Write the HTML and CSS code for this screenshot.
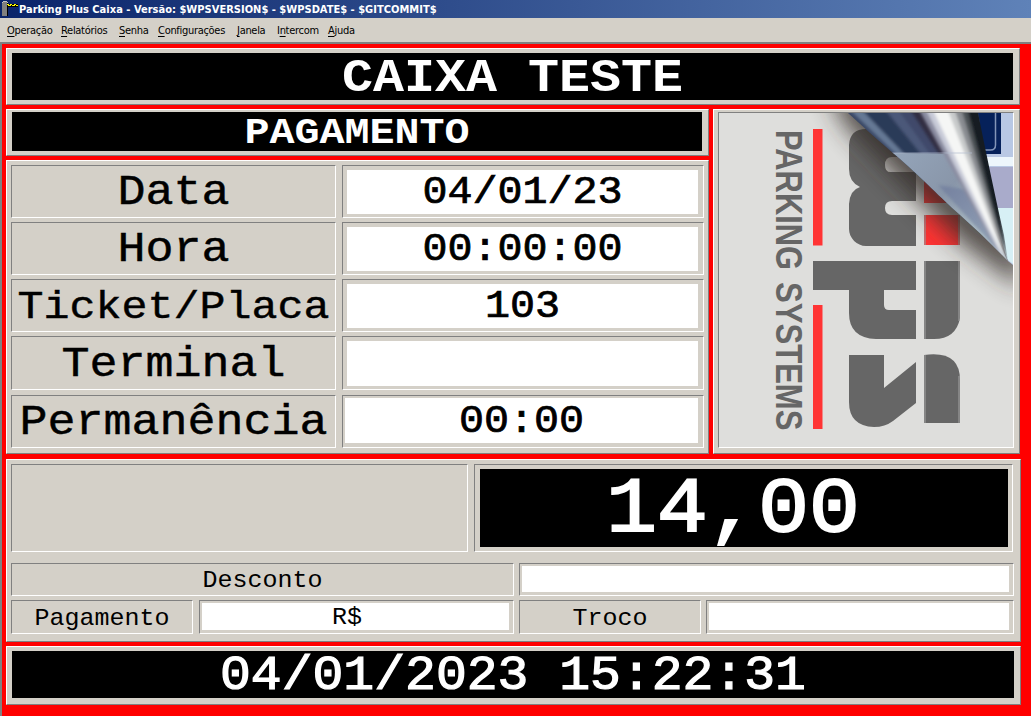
FILE: index.html
```html
<!DOCTYPE html>
<html lang="pt-BR">
<head>
<meta charset="utf-8">
<title>Parking Plus Caixa</title>
<link rel="stylesheet" href="styles.css">
</head>
<body>
<div class="window">
  <header class="titlebar">
    <svg class="app-icon" width="18" height="18" viewBox="0 0 18 18" shape-rendering="crispEdges">
      <path d="M3 2h4v1h1v13H2V3h1z" fill="#808080"/>
      <path d="M3 1h4v1H3zM2 2h1v1H2zM7 2h1v1H7z" fill="#c0c0c0"/>
      <path d="M7 3h1v13H7z" fill="#000"/>
      <path d="M7 4h11v3H7z" fill="#000"/>
      <path d="M7 4h2v1H7zM10 4h2v1h-2zM14 4h2v1h-2zM8 5h3v1H8zM12 5h3v1h-3zM16 5h2v1h-2z" fill="#ff0"/>
    </svg>
    <span class="title">Parking Plus Caixa - Versão: $WPSVERSION$ - $WPSDATE$ - $GITCOMMIT$</span>
  </header>
  <nav class="menubar">
    <span class="menu m-op"><u>O</u>peração</span>
    <span class="menu m-rel"><u>R</u>elatórios</span>
    <span class="menu m-sen"><u>S</u>enha</span>
    <span class="menu m-conf"><u>C</u>onfigurações</span>
    <span class="menu m-jan"><u>J</u>anela</span>
    <span class="menu m-int">I<u>n</u>tercom</span>
    <span class="menu m-aj"><u>A</u>juda</span>
  </nav>
  <main class="board">
    <section class="panel top"><div class="screen caixa"><span>CAIXA TESTE</span></div></section>
    <div class="middle">
      <div class="left">
        <section class="panel mode"><div class="screen pagamento"><span>PAGAMENTO</span></div></section>
        <section class="panel fields">
          <div class="sunken label"><span>Data</span></div>
          <div class="sunken field"><div class="value"><span>04/01/23</span></div></div>
          <div class="sunken label"><span>Hora</span></div>
          <div class="sunken field"><div class="value"><span>00:00:00</span></div></div>
          <div class="sunken label tight"><span>Ticket/Placa</span></div>
          <div class="sunken field"><div class="value"><span>103</span></div></div>
          <div class="sunken label"><span>Terminal</span></div>
          <div class="sunken field"><div class="value"></div></div>
          <div class="sunken label"><span>Permanência</span></div>
          <div class="sunken field last"><div class="value"><span>00:00</span></div></div>
        </section>
      </div>
      <section class="panel brand">
        <div class="sunken picture">
          <svg class="logo" width="294" height="334" viewBox="719 113 294 334">
            <defs>
              <filter id="soft" x="-40%" y="-40%" width="180%" height="180%"><feGaussianBlur stdDeviation="12"/></filter>
              <filter id="fine" x="-20%" y="-20%" width="140%" height="140%"><feGaussianBlur stdDeviation="1.6"/></filter>
              <clipPath id="curl"><path d="M848 113C870 133 888 149 899 158C925 181 940 197 959 214Q984 236 1008 261L1004 235Q994 192 978 113Z"/></clipPath>
              <clipPath id="low"><path d="M840 153H1013V270H840Z"/></clipPath>
              <linearGradient id="glaze" x1="900" y1="155" x2="985" y2="235" gradientUnits="userSpaceOnUse">
                <stop offset="0" stop-color="#93a3b8"/><stop offset=".5" stop-color="#8996a9"/><stop offset="1" stop-color="#b5c6cb"/>
              </linearGradient>
            </defs>
            <rect x="719" y="113" width="294" height="334" fill="#dededc"/>
            <g fill="#666">
              <path d="M916 246H866C857 246 849 238 849 229V204Q850 190 860 187Q849 182 849 169V145Q850 129 866 129H916V157H892Q885 157 885 165T892 172H916V201H892Q885 201 885 208T892 215H916Z"/>
              <path d="M813 261H916V290H884V305Q884 310 889 310H916V339H876Q849 338 849 313V290H813Z"/>
              <path d="M924 261H960V318Q956 339 934 339H924Z"/>
              <path d="M849 355H884V388L916 362V403L893 421Q885 427 874 427Q849 426 849 402Z"/>
              <path d="M924 355Q960 350 960 380V423H924Z"/>
            </g>
            <path d="M813 129h9.500v116.500h-9.500zM813 305h9.500v124h-9.500zM924 170h36v33h-36zM924 215h36v30h-36z" fill="#ff3434"/>
            <path d="M924 215h2v30h-2zM958 215h2v30h-2zM924 261h2v78h-2zM958 261h2v60h-2zM924 355h2v68h-2zM958 376h2v47h-2z" fill="#999" opacity=".6"/>
            <path d="M828 90L845 125L910 192L960 242L1022 288V250L880 90Z" fill="#302b25" opacity=".8" filter="url(#soft)"/>
            <path d="M970 113L1008 261L1013 265V113Z" fill="#b9c8e4"/>
            <path d="M970 113h31v41h-31z" fill="#06215a"/>
            <path d="M995.500 113v32q0 5-5 5H970" fill="none" stroke="#8295b8" stroke-width="1.500"/>
            <path d="M978 157h35v9h-35z" fill="#edf6fc"/>
            <path d="M982 167h31v41h-19z" fill="#a9abcb"/>
            <path d="M992 208h21v56l-6-5z" fill="#d7f0f5"/>
            <g clip-path="url(#curl)">
              <path d="M840 113h140v155H840z" fill="#3a4866"/>
              <g filter="url(#fine)">
                <path d="M848 108H862L1008 262Z" fill="#657894"/>
                <path d="M860 108H884L1008 262Z" fill="#293b58"/>
                <path d="M884 108H897L1008 262Z" fill="#4c5879"/>
                <path d="M897 108H909L1008 262Z" fill="#414a6b"/>
                <path d="M909 108H923L1008 262Z" fill="#302e43"/>
              </g>
              <path d="M885 153L960 154L1008 262L960 222Z" fill="url(#glaze)" clip-path="url(#low)"/>
              <path d="M938 185L970 190L1008 262Z" fill="#66739a" opacity=".5" filter="url(#fine)"/>
              <g filter="url(#fine)">
                <path d="M918 108H928L1008 270Z" fill="#8a8ca0"/>
                <path d="M925 108H934L1008 270Z" fill="#c8cbd8"/>
                <path d="M932 108H949L1009 270Z" fill="#f5f6f5"/>
                <path d="M947 108H955L1009 268Z" fill="#c8cacb"/>
                <path d="M954 108H962L1008 264Z" fill="#898c91"/>
                <path d="M961 108H968L1008 262Z" fill="#4c5155"/>
                <path d="M967 108H984L1008 262Z" fill="#131a24"/>
              </g>
              <path d="M890 153H972" stroke="#b6bfd2" stroke-width="1" opacity=".7"/>
            </g>
            <g class="logo-text">
              <text transform="translate(775.500 130) rotate(90) scale(.835 1)">PARKING</text>
              <text transform="translate(775.500 282) rotate(90) scale(.84 1)">SYSTEMS</text>
            </g>
          </svg>
        </div>
      </section>
    </div>
    <section class="panel payment">
      <div class="row total">
        <div class="sunken message"></div>
        <div class="sunken amount"><div class="screen"><span>14,00</span></div></div>
      </div>
      <div class="row discount">
        <div class="sunken small"><span>Desconto</span></div>
        <div class="sunken entry"><div class="value"></div></div>
      </div>
      <div class="row change">
        <div class="sunken small"><span>Pagamento</span></div>
        <div class="sunken entry paid"><div class="value"><span>R$</span></div></div>
        <div class="sunken small"><span>Troco</span></div>
        <div class="sunken entry"><div class="value"></div></div>
      </div>
    </section>
    <section class="panel clock"><div class="screen"><span>04/01/2023 15:22:31</span></div></section>
  </main>
</div>
</body>
</html>
```
FILE: styles.css
```css
* { box-sizing: border-box; }
body { margin: 0; background: #f00; overflow: hidden; }
.window { width: 1031px; height: 716px; display: flex; flex-direction: column; font-family: "Liberation Mono", monospace; color: #000; }
span { white-space: pre; display: block; }

.titlebar { flex: none; height: 18px; display: flex; background: linear-gradient(90deg, #0a246a, #5f82b8); }
.app-icon { display: block; margin-right: 1px; }
.title { font: bold 11px/19px "DejaVu Sans Condensed", "DejaVu Sans", sans-serif; color: #fff; letter-spacing: 0.02px; }
.menubar { flex: none; height: 24px; background: #d4d0c8; display: flex; padding-left: 7px; font: 11px/25px "DejaVu Sans Condensed", "DejaVu Sans", sans-serif; letter-spacing: -0.3px; }
.menubar u { text-underline-offset: 2px; text-decoration-thickness: 1px; }
.m-op { width: 54px; }
.m-rel { width: 58px; }
.m-sen { width: 39px; }
.m-conf { width: 79px; }
.m-jan { width: 40px; }
.m-int { width: 51px; }

.board { flex: 1; background: #f00; border-top: 2px solid #808080; border-left: 2px solid #808080; padding: 4px 0 0 4px; display: flex; flex-direction: column; line-height: 1; }
.board span { transform: translateY(0.5px) scaleY(0.92); transform-origin: 50% 76.6%; }
.panel { background: #d4d0c8; border: 1px solid; border-color: #fff #808080 #808080 #fff; }
.sunken { border: 1px solid; border-color: #808080 #fff #fff #808080; min-height: 0; min-width: 0; }
.screen { background: #000; color: #fff; height: 100%; display: flex; align-items: center; justify-content: center; }
.value { background: #fff; height: 100%; display: flex; align-items: center; justify-content: center; }

.top { width: 1014px; height: 57px; padding: 4px 6px 4px 5px; margin-bottom: 4px; }
.caixa { font-size: 51.700px; font-weight: bold; }
.middle { display: flex; gap: 4px; height: 345px; }
.left { width: 703px; display: flex; flex-direction: column; gap: 4px; }
.mode { height: 47px; padding: 2px 6px 4px 5px; }
.pagamento { font-size: 41.700px; font-weight: bold; }
.board .caixa span, .board .pagamento span { transform: translateY(0.5px) scaleY(0.89); }
.fields { height: 294px; padding: 4px; display: grid; grid-template-columns: 325px 362px; grid-template-rows: 53px 53px 53px 54px 53px; column-gap: 6px; row-gap: 4px; align-content: start; }
.fields > :nth-last-child(-n+2) { position: relative; top: 1px; }
.label { display: flex; align-items: center; justify-content: center; font-size: 46.700px; -webkit-text-stroke: 0.5px #000; }
.board .label span { transform: translateY(1px) scaleY(0.9); }
.tight { font-size: 43.300px; }
.field { padding: 4px 5px 3px 4px; font-size: 41.700px; -webkit-text-stroke: 0.8px #000; }
.field.last { padding: 2px 5px 4px 2px; }

.brand { width: 307px; padding: 2px 5px 5px 4px; }
.picture { width: 296px; height: 336px; }
.logo { display: block; }
.logo-text { font: bold 37px "Liberation Sans", sans-serif; fill: #666; }

.payment { width: 1015px; height: 183px; margin-top: 5px; padding: 4px; }
.row { display: grid; grid-template-rows: 100%; }
.total { grid-template-columns: 457px 539px; column-gap: 6px; height: 88px; }
.amount { padding: 4px 4px 4px 5px; font-size: 84.500px; }
.amount .screen { padding-right: 22px; -webkit-text-stroke: 2.2px #fff; }
.discount { grid-template-columns: 503px 495px; column-gap: 5px; height: 33px; margin-top: 11px; }
.change { grid-template-columns: 183px 315px 182px 308px; column-gap: 5px; height: 34px; margin-top: 4px; }
.change > :first-child { margin-right: 1px; }
.small { display: flex; align-items: center; justify-content: center; font-size: 25px; }
.entry { padding: 2px 4px 3px 2px; font-size: 25px; }
.paid .value { padding-right: 17px; }

.clock { width: 1015px; height: 59px; margin-top: 4px; padding: 4px 6px 6px 5px; font-size: 51.400px; -webkit-text-stroke: 1.3px #fff; }
```
